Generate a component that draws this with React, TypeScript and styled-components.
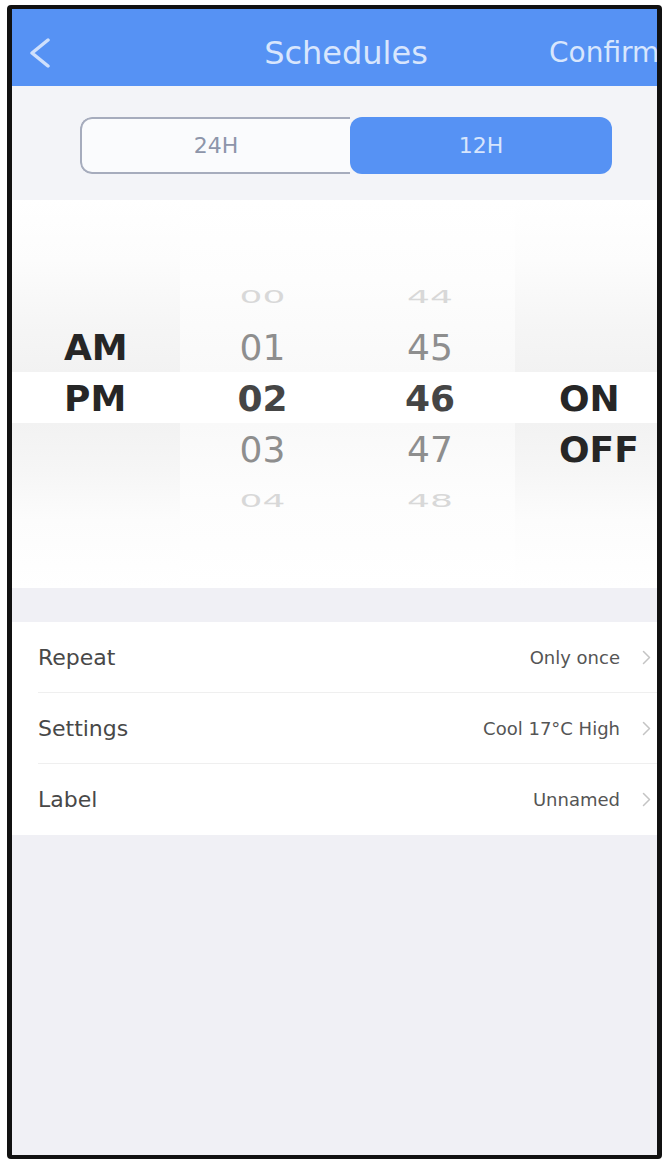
import { FC } from 'react';
import styled, { createGlobalStyle } from 'styled-components';

type Tone = 'far' | 'near' | 'sel' | 'bold' | 'empty';

const hours: [string, Tone][] = [['00', 'far'], ['01', 'near'], ['02', 'sel'], ['03', 'near'], ['04', 'far']];
const minutes: [string, Tone][] = [['44', 'far'], ['45', 'near'], ['46', 'sel'], ['47', 'near'], ['48', 'far']];
const meridiem: [string, Tone][] = [['', 'empty'], ['AM', 'bold'], ['PM', 'bold'], ['', 'empty'], ['', 'empty']];
const power: [string, Tone][] = [['', 'empty'], ['', 'empty'], ['ON', 'bold'], ['OFF', 'bold'], ['', 'empty']];

const rows = [
  { label: 'Repeat', value: 'Only once' },
  { label: 'Settings', value: 'Cool 17°C High' },
  { label: 'Label', value: 'Unnamed' },
];

const App: FC = () => {
  return (
    <>
      <Global />
      <Page>
        <Phone>
          <Header>
            <Back>
              <svg width="24" height="30" viewBox="0 0 24 30">
                <path d="M20 2 L4 15 L20 28" fill="none" stroke="#cfe0fc" strokeWidth="3.5" strokeLinecap="round" strokeLinejoin="round" />
              </svg>
            </Back>
            <Title>Schedules</Title>
            <Confirm>Confirm</Confirm>
          </Header>

          <TopBand>
            <Segment>
              <SegItem>24H</SegItem>
              <SegItem $active>12H</SegItem>
            </Segment>
          </TopBand>

          <Picker>
            <Column $shade="strong" $align="left" $pad={52}>
              {meridiem.map(([t, tone], i) => <Cell key={i} $tone={tone}>{t}</Cell>)}
            </Column>
            <Column $shade="soft" $align="center" $pad={0}>
              {hours.map(([t, tone], i) => <Cell key={i} $tone={tone}>{t}</Cell>)}
            </Column>
            <Column $shade="soft" $align="center" $pad={0}>
              {minutes.map(([t, tone], i) => <Cell key={i} $tone={tone}>{t}</Cell>)}
            </Column>
            <Column $shade="strong" $align="left" $pad={44}>
              {power.map(([t, tone], i) => <Cell key={i} $tone={tone}>{t}</Cell>)}
            </Column>
          </Picker>

          <List>
            {rows.map((r, i) => (
              <Row key={r.label} $last={i === rows.length - 1}>
                <RowLabel>{r.label}</RowLabel>
                <RowValue>{r.value}</RowValue>
                <svg width="9" height="15" viewBox="0 0 9 15">
                  <path d="M1.5 1.5 L7.5 7.5 L1.5 13.5" fill="none" stroke="#c4c4c4" strokeWidth="1.5" strokeLinecap="round" strokeLinejoin="round" />
                </svg>
              </Row>
            ))}
          </List>
        </Phone>
      </Page>
    </>
  );
};

const Global = createGlobalStyle`
  html, body {
    margin: 0;
    padding: 0;
    background: #ffffff;
  }
  body {
    font-family: "DejaVu Sans", "Liberation Sans", sans-serif;
  }
`;

const Page = styled.div`
  width: 665px;
  height: 1159px;
  box-sizing: border-box;
  padding: 5px 3px 0 7px;
  background: #ffffff;
`;

const Phone = styled.div`
  height: 1154px;
  box-sizing: border-box;
  border: 5px solid #111111;
  border-top-width: 4px;
  border-bottom-width: 4px;
  border-radius: 4px;
  background: #f0f0f5;
  overflow: hidden;
  display: flex;
  flex-direction: column;
`;

const Header = styled.div`
  height: 77px;
  flex: none;
  box-sizing: border-box;
  padding-top: 10px;
  background: #5692f4;
  display: flex;
  align-items: center;
  overflow: hidden;
  white-space: nowrap;
`;

const Back = styled.div`
  width: 131px;
  flex: none;
  box-sizing: border-box;
  padding-left: 16px;
  display: flex;
  align-items: center;
`;

const Title = styled.div`
  flex: 1;
  text-align: center;
  font-size: 32px;
  color: #d8e6fd;
`;

const Confirm = styled.div`
  flex: 0 0 108px;
  font-size: 28px;
  color: #d8e6fd;
  overflow: hidden;
`;

const TopBand = styled.div`
  height: 114px;
  flex: none;
  box-sizing: border-box;
  padding: 31px 45px 0 68px;
  background: #f3f4f8;
`;

const Segment = styled.div`
  height: 57px;
  display: grid;
  grid-template-columns: 270px 1fr;
  border-radius: 12px;
  overflow: hidden;
  box-sizing: border-box;
`;

const SegItem = styled.div<{ $active?: boolean }>`
  display: flex;
  align-items: center;
  justify-content: center;
  font-size: 22px;
  box-sizing: border-box;
  color: ${p => (p.$active ? '#d7e5fd' : '#8d95aa')};
  background: ${p => (p.$active ? '#5692f4' : '#fafbfd')};
  border: ${p => (p.$active ? 'none' : '2px solid #a6acbd')};
  border-right: none;
  border-radius: 12px 0 0 12px;
`;

const Picker = styled.div`
  height: 388px;
  flex: none;
  background: #ffffff;
  display: grid;
  grid-template-columns: 168px 165px 170px 1fr;
`;

const strong = `linear-gradient(to bottom,
  #ffffff 0px, #fcfcfc 60px, #f6f6f6 120px, #f2f2f2 172px,
  #ffffff 172px, #ffffff 223px,
  #f2f2f2 223px, #f6f6f6 270px, #fcfcfc 320px, #ffffff 388px)`;
const soft = `linear-gradient(to bottom,
  #ffffff 0px, #fdfdfd 80px, #f9f9f9 172px,
  #ffffff 172px, #ffffff 223px,
  #f9f9f9 223px, #fdfdfd 300px, #ffffff 388px)`;

const Column = styled.div<{ $shade: 'strong' | 'soft'; $align: 'left' | 'center'; $pad: number }>`
  display: flex;
  flex-direction: column;
  box-sizing: border-box;
  padding-top: 71px;
  padding-left: ${p => p.$pad}px;
  align-items: ${p => (p.$align === 'left' ? 'flex-start' : 'center')};
  background: ${p => (p.$shade === 'strong' ? strong : soft)};
`;

const Cell = styled.div<{ $tone: Tone }>`
  height: 51px;
  line-height: 51px;
  font-size: 36px;
  white-space: nowrap;
  font-weight: ${p => (p.$tone === 'bold' || p.$tone === 'sel' ? 700 : 400)};
  color: ${p =>
    p.$tone === 'bold' ? '#262626' :
    p.$tone === 'sel' ? '#454545' :
    p.$tone === 'near' ? '#8e8e8e' : '#d8d8d8'};
  transform: ${p => (p.$tone === 'far' ? 'scaleY(0.5)' : 'none')};
`;

const List = styled.div`
  margin-top: 34px;
  background: #ffffff;
  flex: none;
`;

const Row = styled.div<{ $last: boolean }>`
  height: 71px;
  box-sizing: border-box;
  margin-left: 26px;
  padding-right: 6px;
  display: flex;
  align-items: center;
  gap: 22px;
  border-bottom: ${p => (p.$last ? 'none' : '1px solid #efefef')};
`;

const RowLabel = styled.div`
  flex: 1;
  font-size: 22px;
  color: #484848;
`;

const RowValue = styled.div`
  font-size: 18px;
  color: #555555;
`;

export default App;
